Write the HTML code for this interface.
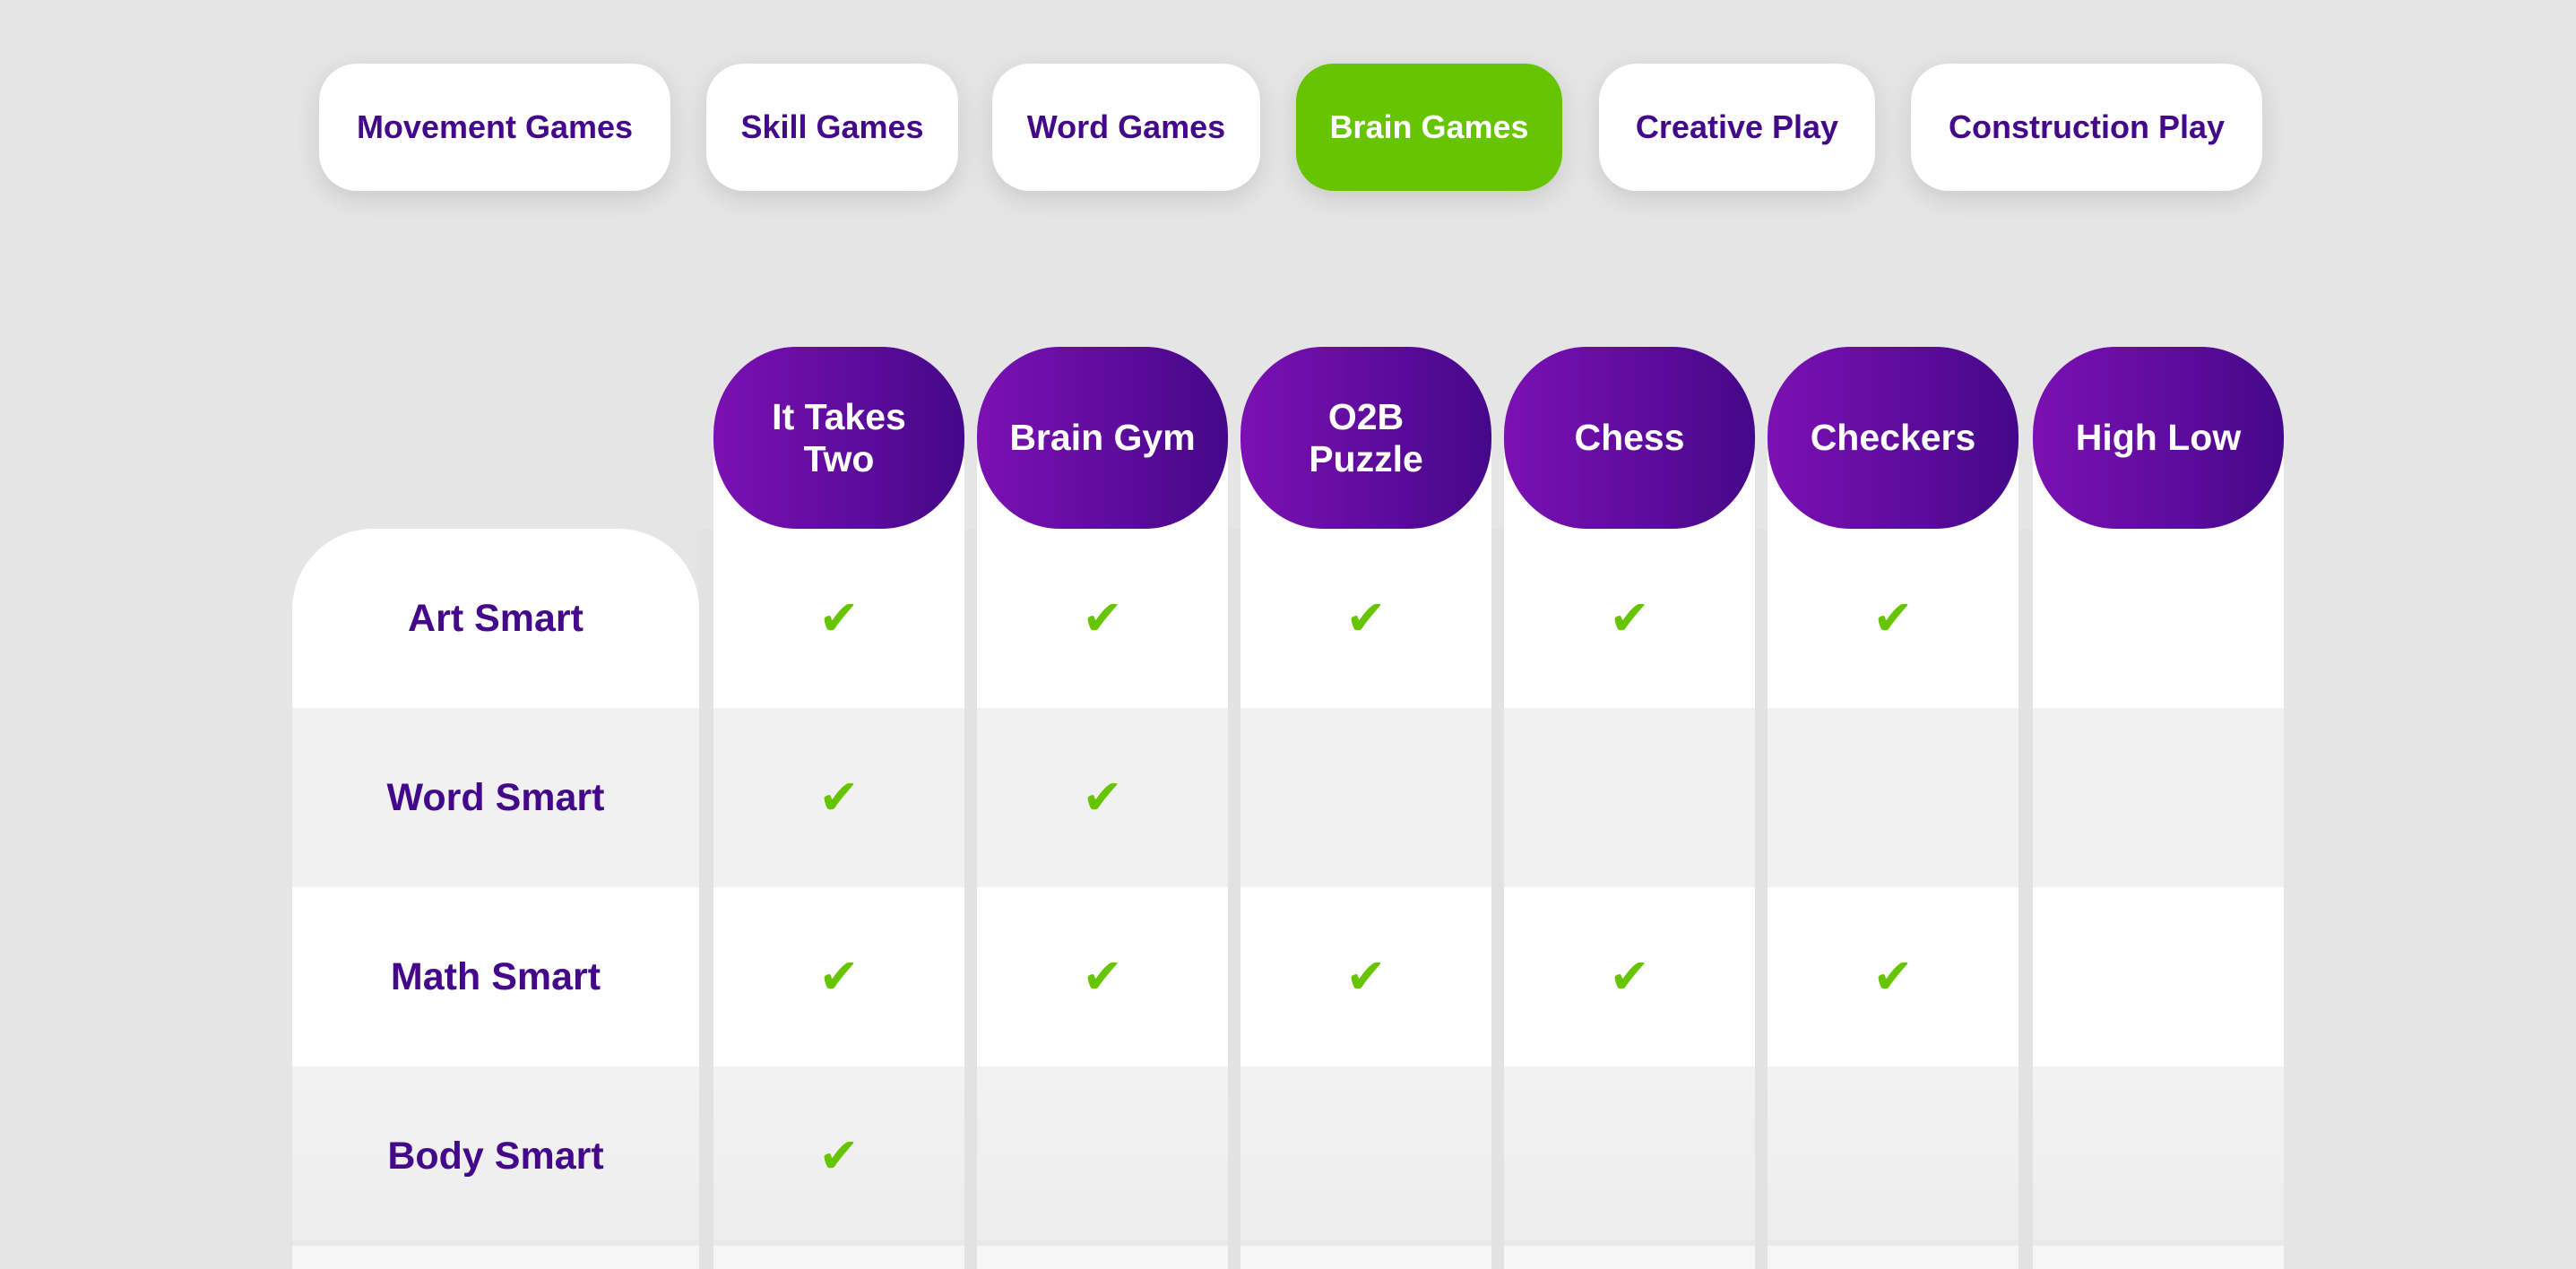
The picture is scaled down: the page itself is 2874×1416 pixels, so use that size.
<!DOCTYPE html>
<html><head><meta charset="utf-8">
<style>
html,body{margin:0;padding:0;width:2874px;height:1416px;overflow:hidden;}
body{background:#e5e5e5;position:relative;font-family:"Liberation Sans",sans-serif;font-weight:bold;}
.tab{position:absolute;top:71px;height:142px;background:#fff;border-radius:42px;box-shadow:0 8px 28px rgba(0,0,0,0.12);color:#44088a;font-size:36px;display:flex;align-items:center;justify-content:center;}
.tab.on{background:#66c400;color:#fff;}
.col{position:absolute;top:500px;height:916px;width:280px;background:#fff;}
.hdr{position:absolute;top:387px;height:203px;width:280px;border-radius:92px/98px;background:linear-gradient(90deg,#7c10b4,#450889);color:#fff;font-size:41px;display:flex;align-items:center;justify-content:center;text-align:center;line-height:47px;}
.row{position:absolute;left:326px;width:2222px;height:200px;}
.lab{position:absolute;left:326px;width:454px;height:200px;color:#44088a;font-size:43px;display:flex;align-items:center;justify-content:center;}
.sep{position:absolute;top:590px;height:826px;width:15px;background:#e2e2e2;}
.ck{position:absolute;width:60px;margin-left:-30px;text-align:center;color:#66c400;font-size:54px;font-family:"DejaVu Sans",sans-serif;line-height:60px;}
</style></head><body>
<div class="tab" style="left:356px;width:392px">Movement Games</div>
<div class="tab" style="left:788px;width:281px">Skill Games</div>
<div class="tab" style="left:1107px;width:299px">Word Games</div>
<div class="tab on" style="left:1446px;width:297px">Brain Games</div>
<div class="tab" style="left:1784px;width:308px">Creative Play</div>
<div class="tab" style="left:2132px;width:392px">Construction Play</div>

<div class="col" style="left:796px"></div>
<div class="col" style="left:1090px"></div>
<div class="col" style="left:1384px"></div>
<div class="col" style="left:1678px"></div>
<div class="col" style="left:1972px"></div>
<div class="col" style="left:2268px"></div>
<div style="position:absolute;left:326px;top:590px;width:454px;height:826px;background:#fff;border-radius:90px 90px 0 0/90px 90px 0 0"></div>

<div class="row" style="top:790px;background:#f1f1f1"></div>
<div class="row" style="top:1190px;background:linear-gradient(#f2f2f2,#ededed)"></div>
<div class="row" style="top:1390px;height:26px;background:#f6f6f6"></div>
<div style="position:absolute;left:326px;top:1384px;width:2222px;height:6px;background:#e9e9e9"></div>

<div class="sep" style="left:780px;width:16px"></div>
<div class="sep" style="left:1076px;width:14px"></div>
<div class="sep" style="left:1370px;width:14px"></div>
<div class="sep" style="left:1664px;width:14px"></div>
<div class="sep" style="left:1958px;width:14px"></div>
<div class="sep" style="left:2252px;width:16px"></div>

<div class="hdr" style="left:796px">It Takes<br>Two</div>
<div class="hdr" style="left:1090px">Brain Gym</div>
<div class="hdr" style="left:1384px">O2B<br>Puzzle</div>
<div class="hdr" style="left:1678px">Chess</div>
<div class="hdr" style="left:1972px">Checkers</div>
<div class="hdr" style="left:2268px">High Low</div>

<div class="lab" style="top:590px">Art Smart</div>
<div class="lab" style="top:790px">Word Smart</div>
<div class="lab" style="top:990px">Math Smart</div>
<div class="lab" style="top:1190px">Body Smart</div>

<div class="ck" style="left:936px;top:660px">✔</div>
<div class="ck" style="left:1230px;top:660px">✔</div>
<div class="ck" style="left:1524px;top:660px">✔</div>
<div class="ck" style="left:1818px;top:660px">✔</div>
<div class="ck" style="left:2112px;top:660px">✔</div>

<div class="ck" style="left:936px;top:860px">✔</div>
<div class="ck" style="left:1230px;top:860px">✔</div>

<div class="ck" style="left:936px;top:1060px">✔</div>
<div class="ck" style="left:1230px;top:1060px">✔</div>
<div class="ck" style="left:1524px;top:1060px">✔</div>
<div class="ck" style="left:1818px;top:1060px">✔</div>
<div class="ck" style="left:2112px;top:1060px">✔</div>

<div class="ck" style="left:936px;top:1260px">✔</div>
</body></html>
